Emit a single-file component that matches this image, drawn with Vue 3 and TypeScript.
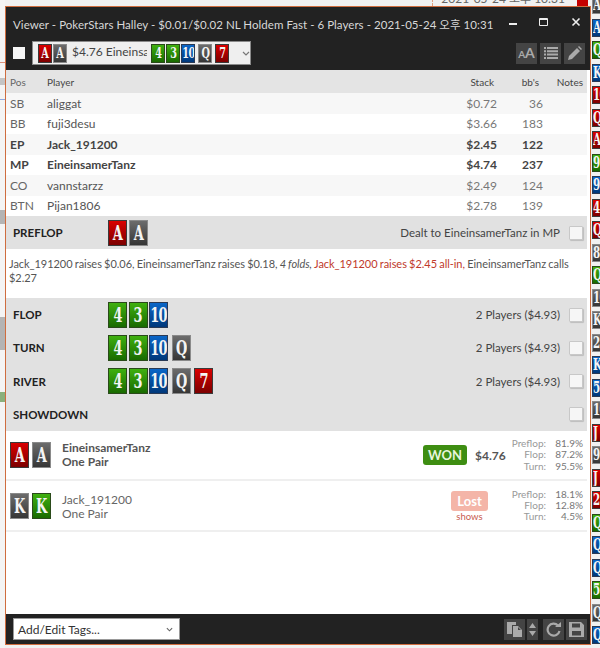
<script setup lang="ts">
type Suit = 'r' | 'k' | 'g' | 'b'
interface Card {
  rank: string
  suit: Suit
}

const c = (code: string): Card => ({
  rank: code.slice(0, -1),
  suit: code.slice(-1) as Suit
})
const cards = (codes: string) => codes.split(' ').map(c)

const summary = cards('Ar Ak')
const board = cards('4g 3g 10b Qk 7r')

const players = [
  { pos: 'SB', name: 'aliggat', stack: '$0.72', bbs: '36' },
  { pos: 'BB', name: 'fuji3desu', stack: '$3.66', bbs: '183' },
  { pos: 'EP', name: 'Jack_191200', stack: '$2.45', bbs: '122', bold: true },
  { pos: 'MP', name: 'EineinsamerTanz', stack: '$4.74', bbs: '237', bold: true },
  { pos: 'CO', name: 'vannstarzz', stack: '$2.49', bbs: '124' },
  { pos: 'BTN', name: 'Pijan1806', stack: '$2.78', bbs: '139' }
]

const streets = [
  { name: 'FLOP', count: 3, info: '2 Players ($4.93)' },
  { name: 'TURN', count: 4, info: '2 Players ($4.93)' },
  { name: 'RIVER', count: 5, info: '2 Players ($4.93)' },
  { name: 'SHOWDOWN', count: 0, info: '' }
]

const sideCards = cards(
  'Ak Ab Qg Kb 10r Qr Ar 9g 9b 4r Qr 8k Qg 10k Kk 2k Kb 5b 10k Jr 9k Jr 2r Qg Qb Qb 5g Qk Qb'
)
</script>

<template>
  <div class="page">
    <div class="left-strip"></div>
    <div class="middle">
      <div class="top-strip">
        <span class="top-date">2021-05-24 오후 10:31</span>
        <span class="top-card"></span>
      </div>
      <div class="window">
        <div class="head">
          <div class="title-row">
            <span class="title">Viewer - PokerStars Halley - $0.01/$0.02 NL Holdem Fast - 6 Players - 2021-05-24 오후 10:31</span>
            <div class="win-btns">
              <svg width="8" height="8" viewBox="0 0 8 8"><rect x="0" y="5" width="8" height="2" fill="#eee" /></svg>
              <svg width="10" height="9" viewBox="0 0 10 9"><path d="M.5.5h8v7h-8zM.5 1.5h8" fill="none" stroke="#eee" /></svg>
              <svg width="10" height="10" viewBox="0 0 10 10"><path d="M1.5 1.5l7 7M8.5 1.5l-7 7" stroke="#eee" stroke-width="1.6" /></svg>
            </div>
          </div>
          <div class="tool-row">
            <span class="head-check"></span>
            <div class="hand-select">
              <span v-for="(card, i) in summary" :key="i" class="card mini" :class="card.suit"><span class="rank">{{ card.rank }}</span></span>
              <span class="hand-text">$4.76 Eineinsai</span>
              <span v-for="(card, i) in board" :key="i" class="card mini" :class="[card.suit, { apart: i > 2 }]"><span class="rank">{{ card.rank }}</span></span>
              <svg class="chev" width="8" height="5" viewBox="0 0 8 5"><path d="M1 1l3 3 3-3" fill="none" stroke="#777" stroke-width="1.2" /></svg>
            </div>
            <div class="tool-btns">
              <span class="tool-btn aa"><small>A</small>A</span>
              <span class="tool-btn">
                <svg width="14" height="12" viewBox="0 0 14 12" fill="#aaa"><path d="M0 0h2v2H0zM3 0h11v2H3zM0 3.300h2v2H0zM3 3.300h11v2H3zM0 6.600h2v2H0zM3 6.600h11v2H3zM0 10h2v2H0zM3 10h11v2H3z" /></svg>
              </span>
              <span class="tool-btn">
                <svg width="14" height="14" viewBox="0 0 14 14" fill="#aaa"><path d="M0 14l1-4 8-8 3 3-8 8zM10 1l1-1 3 3-1 1z" /></svg>
              </span>
            </div>
          </div>
        </div>

        <div class="body">
          <div class="row col-head">
            <span class="pos">Pos</span>
            <span class="name">Player</span>
            <span class="stack">Stack</span>
            <span class="bbs">bb's</span>
            <span class="notes">Notes</span>
          </div>
          <div v-for="p in players" :key="p.pos" class="row player" :class="{ bold: p.bold }">
            <span class="pos">{{ p.pos }}</span>
            <span class="name">{{ p.name }}</span>
            <span class="stack">{{ p.stack }}</span>
            <span class="bbs">{{ p.bbs }}</span>
            <span class="notes"></span>
          </div>

          <div class="street preflop">
            <b class="street-name">PREFLOP</b>
            <span v-for="(card, i) in summary" :key="i" class="card" :class="card.suit"><span class="rank">{{ card.rank }}</span></span>
            <span class="street-info">Dealt to EineinsamerTanz in MP</span>
            <span class="check"></span>
          </div>
          <p class="actions">Jack_191200 raises $0.06, EineinsamerTanz raises $0.18, <i>4 folds,</i> <em>Jack_191200 raises $2.45 all-in,</em> EineinsamerTanz calls $2.27</p>
          <div class="streets">
            <div v-for="s in streets" :key="s.name" class="street">
              <b class="street-name">{{ s.name }}</b>
              <span
                v-for="(card, i) in board.slice(0, s.count)"
                :key="i"
                class="card"
                :class="[card.suit, { apart: i > 2 }]"
              ><span class="rank">{{ card.rank }}</span></span>
              <span class="street-info">{{ s.info }}</span>
              <span class="check"></span>
            </div>
          </div>

          <div class="result">
            <span class="card r"><span class="rank">A</span></span>
            <span class="card k"><span class="rank">A</span></span>
            <div class="who strong">
              <div>EineinsamerTanz</div>
              <div>One Pair</div>
            </div>
            <span class="badge won">WON</span>
            <b class="amount">$4.76</b>
            <dl class="odds">
              <dt>Preflop:</dt><dd>81.9%</dd>
              <dt>Flop:</dt><dd>87.2%</dd>
              <dt>Turn:</dt><dd>95.5%</dd>
            </dl>
          </div>
          <div class="result">
            <span class="card k"><span class="rank">K</span></span>
            <span class="card g"><span class="rank">K</span></span>
            <div class="who">
              <div>Jack_191200</div>
              <div>One Pair</div>
            </div>
            <div class="lost-box">
              <span class="badge lost">Lost</span>
              <span class="shows">shows</span>
            </div>
            <dl class="odds">
              <dt>Preflop:</dt><dd>18.1%</dd>
              <dt>Flop:</dt><dd>12.8%</dd>
              <dt>Turn:</dt><dd>4.5%</dd>
            </dl>
          </div>
        </div>

        <div class="foot">
          <div class="tag-select">
            <span>Add/Edit Tags...</span>
            <svg width="7" height="5" viewBox="0 0 8 5"><path d="M1 1l3 3 3-3" fill="none" stroke="#666" stroke-width="1.3" /></svg>
          </div>
          <div class="foot-btns">
            <span class="tool-btn">
              <svg width="15" height="15" viewBox="0 0 15 15" fill="#aaa"><path d="M0 0h9v3H5v9H0zM6 4h5l4 4v7H6zM11 5v3h3z" /></svg>
            </span>
            <span class="tool-btn updown">
              <svg width="7" height="13" viewBox="0 0 7 13" fill="#aaa"><path d="M3.500 0L7 5H0zM3.500 13L0 8h7z" /></svg>
            </span>
            <span class="tool-btn gap">
              <svg width="15" height="15" viewBox="0 0 15 15"><path d="M12 3.500A6 6 0 1 0 13.500 9" fill="none" stroke="#aaa" stroke-width="2.200" /><path d="M9 5h6V0z" fill="#aaa" /></svg>
            </span>
            <span class="tool-btn">
              <svg width="15" height="15" viewBox="0 0 15 15" fill="#aaa" fill-rule="evenodd"><path d="M0 0h12l3 3v12H0zM3 1.500v4h8v-4zM3 9v4.500h9V9z" /></svg>
            </span>
          </div>
        </div>
      </div>
    </div>
    <div class="side">
      <span v-for="(card, i) in sideCards" :key="i" class="card side-card" :class="card.suit"><span class="rank">{{ card.rank }}</span></span>
    </div>
  </div>
</template>

<style>
html,
body {
  margin: 0;
  background: #f1f1f1;
}
</style>

<style scoped>
.page {
  display: flex;
  width: 600px;
  height: 648px;
  overflow: hidden;
  background: #f1f1f1;
  font-family: Lato, "Noto Sans CJK KR", sans-serif;
  font-size: 11.600px;
  color: #555;
}

.left-strip {
  width: 5px;
  flex: none;
  background: linear-gradient(
    #f4f4f4 0 62px, #d9907c 62px 63px, #f4f4f4 63px 78px, #c4c4c4 78px 85px, #f4f4f4 85px 99px,
    #8fa8e0 99px 100px, #f4f4f4 100px 210px, #b4b4b4 210px 224px, #f4f4f4 224px 317px,
    #b4b4b4 317px 350px, #f4f4f4 350px 392px, #8ab07c 392px 402px, #f4f4f4 402px
  );
}

.middle {
  width: 586px;
  flex: none;
  display: flex;
  flex-direction: column;
  padding-bottom: 3px;
}

.top-strip {
  height: 6px;
  flex: none;
  overflow: hidden;
  display: flex;
  justify-content: flex-end;
  gap: 12px;
  padding-right: 3px;
}

.top-date {
  margin-top: -9px;
  padding-left: 8px;
  border-left: 1px dashed #e0a080;
  font-size: 12px;
  line-height: 16px;
  color: #666;
}

.top-card {
  width: 11px;
  background: #c40000;
}

.window {
  flex: 1;
  min-height: 0;
  display: flex;
  flex-direction: column;
  border: 1px solid #cf6d3f;
  background: #fff;
}

.head {
  height: 63px;
  flex: none;
  background: #222;
  color: #ddd;
}

.title-row {
  display: flex;
  align-items: center;
  height: 33px;
  padding-left: 7px;
}

.title {
  flex: 1;
  min-width: 0;
  font-size: 11.500px;
  white-space: nowrap;
  letter-spacing: 0.05px;
  color: #d8d8d8;
}

.win-btns {
  display: flex;
  flex: none;
  align-items: center;
  gap: 22px;
  padding-right: 9px;
  margin-top: -3px;
}

.tool-row {
  display: flex;
  align-items: center;
  height: 24px;
  margin-top: 1px;
  padding-left: 7px;
}

.head-check {
  width: 12px;
  height: 12px;
  background: #f6f6f6;
  margin-right: 7px;
}

.hand-select {
  width: 219px;
  height: 24px;
  box-sizing: border-box;
  display: flex;
  align-items: center;
  gap: 1px;
  padding-left: 5px;
  background: #efefef;
  border: 1px solid #8a8a8a;
}

.hand-text {
  width: 79px;
  margin-right: 3px;
  padding-left: 4px;
  box-sizing: border-box;
  overflow: hidden;
  white-space: nowrap;
  font-size: 12px;
  color: #444;
  margin-top: -4px;
}

.chev {
  margin-left: 12px;
}

.tool-btns {
  margin-left: auto;
  display: flex;
  gap: 3px;
  padding-right: 5px;
}

.tool-btn {
  width: 21px;
  height: 21px;
  display: flex;
  align-items: center;
  justify-content: center;
  background: #444;
  color: #aaa;
}

.aa {
  font-size: 14px;
  font-weight: 700;
  align-items: baseline;
  line-height: 20px;
}

.aa small {
  font-size: 10px;
}

.body {
  flex: 1;
  min-height: 0;
  padding-right: 3px;
}

.row {
  display: flex;
  align-items: center;
  height: 20.500px;
  padding-left: 4px;
  font-size: 12px;
}

.col-head {
  height: 23px;
  font-size: 10px;
  background: #e4e4e4;
  color: #444;
}

.player:nth-child(even) {
  background: #f7f7f7;
}

.player.bold {
  font-weight: 700;
  color: #444;
}

.pos {
  width: 37px;
  color: #666;
}

.player.bold .pos {
  color: #444;
}

.name {
  flex: 1;
}

.stack {
  width: 50px;
  box-sizing: border-box;
  padding-right: 1px;
  text-align: right;
}

.player .stack,
.player .bbs {
  color: #777;
}

.player.bold .stack,
.player.bold .bbs {
  color: #444;
}

.bbs {
  width: 45px;
  box-sizing: border-box;
  text-align: right;
}

.col-head .stack,
.col-head .bbs {
  padding-right: 4px;
}

.notes {
  width: 44px;
  text-align: right;
  padding-right: 4px;
  box-sizing: border-box;
}

.street {
  display: flex;
  align-items: center;
  height: 33.250px;
  padding: 0 4px 0 7px;
  background: #e1e1e1;
  font-size: 11.500px;
}

.street.preflop {
  height: 33px;
}

.streets {
  background: #e1e1e1;
}

.street-name {
  width: 95px;
  flex: none;
  font-size: 11.500px;
  font-weight: 700;
  color: #222;
}

.street-info {
  margin-left: auto;
  color: #444;
}

.check {
  width: 12px;
  height: 12px;
  margin-left: 9px;
  flex: none;
  border: 1px solid #c8c8c8;
  border-radius: 1px;
  background: #f6f6f6;
  box-shadow: 1px 1px 1px #bdbdbd;
}

.card {
  width: 19px;
  height: 26px;
  box-sizing: border-box;
  flex: none;
  margin-right: 1.500px;
  display: flex;
  align-items: center;
  justify-content: center;
  border: 1px solid #3a3a3a;
  font-family: "DejaVu Serif Condensed", "DejaVu Serif", serif;
  font-weight: 700;
  font-size: 20px;
  letter-spacing: -1px;
  line-height: 1;
  color: #f4f4f4;
  overflow: hidden;
}

.rank {
  display: inline-block;
  flex: none;
  transform: scaleX(0.72);
}

.card.apart {
  margin-left: 2px;
}

.mini {
  width: 14px;
  height: 19px;
  margin-right: 0;
  font-size: 15px;
  letter-spacing: -1px;
}

.mini.apart {
  margin-left: 2px;
}

.r {
  background: linear-gradient(#d90000, #7c0000);
}

.k {
  background: linear-gradient(#6c6c6c, #363636);
  border-color: #8a8a8a;
}

.g {
  background: linear-gradient(#3fb010, #196a00);
  border-color: #2a4a1a;
}

.b {
  background: linear-gradient(#0a66c8, #00387a);
  border-color: #2a3a55;
}

.actions {
  margin: 0;
  height: 49px;
  box-sizing: border-box;
  padding: 8px 16px 0 3px;
  font-size: 11px;
  line-height: 14px;
  word-spacing: -0.5px;
  letter-spacing: -0.05px;
  color: #555;
}

.actions em {
  font-style: normal;
  color: #c0392b;
}

.result {
  display: flex;
  align-items: center;
  height: 50px;
  padding: 0 4px;
  border-bottom: 2px solid #efefef;
  box-sizing: border-box;
}

.result + .result {
  height: 51px;
}

.result .card {
  margin-right: 3px;
}

.who {
  flex: 1;
  margin-left: 8px;
  margin-top: 3px;
  font-size: 12px;
  line-height: 14px;
  color: #666;
}

.who.strong {
  margin-top: 0;
  font-weight: 700;
  color: #555;
}

.badge {
  height: 20px;
  border-radius: 3px;
  display: flex;
  align-items: center;
  justify-content: center;
  font-size: 13px;
  font-weight: 700;
  color: #fff;
}

.won {
  width: 44px;
  background: #3e8e12;
  color: #e8f5dc;
}

.amount {
  width: 28px;
  margin: 0 0 0 8px;
  font-size: 12px;
  color: #555;
}

.lost-box {
  width: 37px;
  margin-right: 15px;
  margin-top: 3px;
  display: flex;
  flex-direction: column;
  align-items: center;
}

.lost {
  width: 37px;
  background: #f4b5a8;
}

.shows {
  font-size: 9.500px;
  line-height: 12px;
  color: #c85a50;
}

.odds {
  width: 80px;
  margin: 0;
  display: grid;
  grid-template-columns: 1fr 37px;
  font-size: 10px;
  line-height: 11.300px;
  text-align: right;
  color: #777;
}

.odds dt {
  color: #999;
}

.odds dd {
  margin: 0;
}

.foot {
  height: 30px;
  flex: none;
  display: flex;
  align-items: center;
  justify-content: space-between;
  padding: 0 3px 0 7px;
  background: #222;
}

.tag-select {
  width: 167px;
  height: 22px;
  box-sizing: border-box;
  display: flex;
  align-items: center;
  justify-content: space-between;
  padding: 0 6px 0 4px;
  background: #fff;
  border: 1px solid #999;
  font-size: 12px;
  color: #333;
}

.foot-btns {
  display: flex;
  gap: 2px;
}

.updown {
  width: 11px;
}

.gap {
  margin-left: 3px;
}

.side {
  flex: 1;
  display: flex;
  flex-direction: column;
  gap: 4.500px;
  margin-top: -4px;
  padding-left: 1px;
}

.side-card {
  width: 20px;
  height: 18px;
  font-size: 16px;
  justify-content: flex-start;
}

.side-card .rank {
  transform-origin: left center;
}
</style>
